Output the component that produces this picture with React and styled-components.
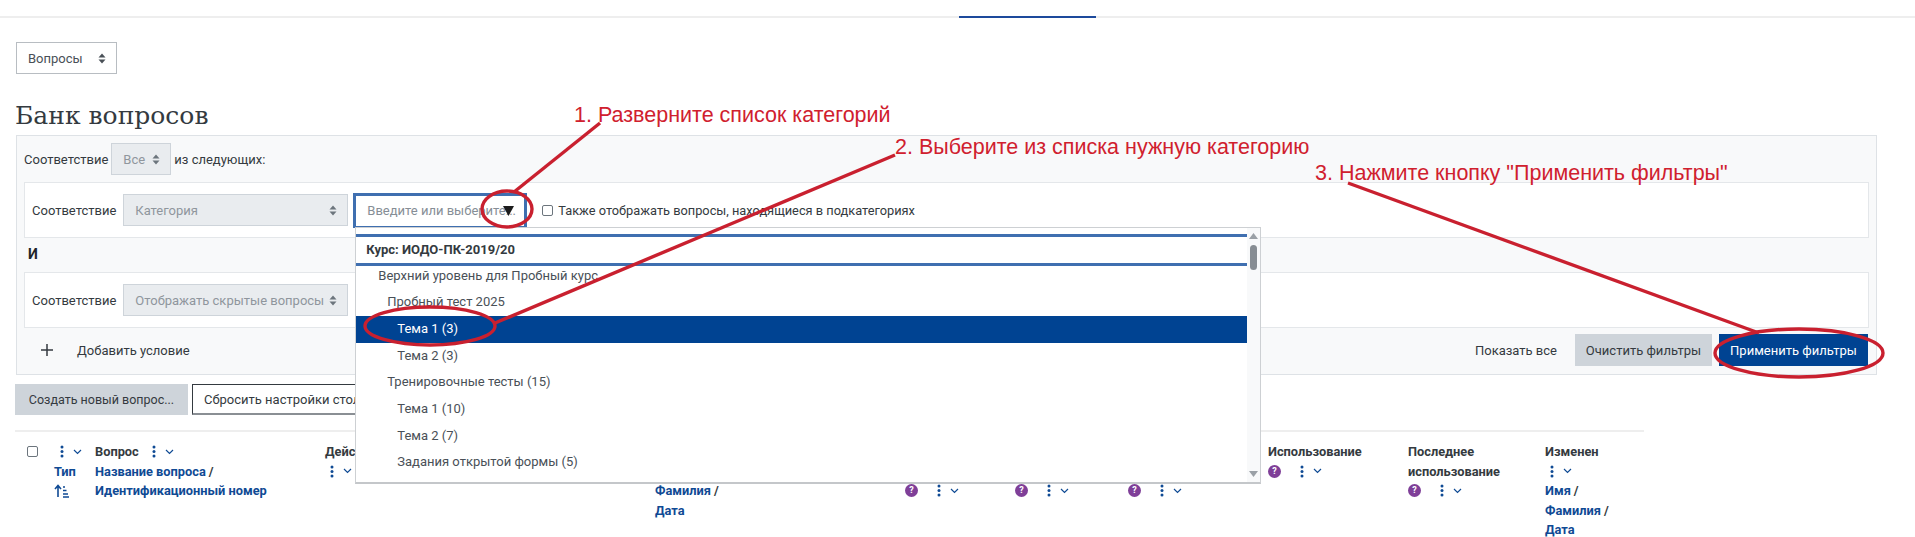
import styled, { createGlobalStyle } from 'styled-components';

const Global = createGlobalStyle`
  html, body { margin: 0; padding: 0; background: #fff; }
  body { font-family: Roboto, "Liberation Sans", sans-serif; font-size: 13px; color: #343a40; }
`;

const Page = styled.div`
  position: relative;
  width: 1915px;
  height: 537px;
  overflow: hidden;
`;

const TopBar = styled.div`
  display: flex;
  height: 16px;
  padding-left: 959px;
  border-bottom: 2px solid #eee;
`;

const ActiveTab = styled.div`
  width: 137px;
  height: 2px;
  margin-top: 16px;
  background: #1d4a9c;
`;

const Main = styled.div`
  padding: 24px 38px 0 16px;
`;

const SelectBox = styled.div`
  display: flex;
  align-items: center;
  justify-content: space-between;
  box-sizing: border-box;
  flex: none;
  width: ${({ $w }) => $w}px;
  height: 32px;
  padding: 0 10px 0 11px;
  border: 1px solid ${({ $disabled }) => ($disabled ? '#ced4da' : '#b8bdc2')};
  background: ${({ $disabled }) => ($disabled ? '#e9ecef' : '#fff')};
  color: ${({ $disabled }) => ($disabled ? '#8f969d' : '#495057')};
`;

const Heading = styled.h2`
  margin: 24px 0 2px -1px;
  height: 35px;
  font-family: "DejaVu Serif", "Liberation Serif", serif;
  font-size: 25px;
  line-height: 35px;
  font-weight: 400;
  color: #343a40;
`;

const FilterPanel = styled.div`
  box-sizing: border-box;
  height: 240px;
  padding: 7px 7px 0;
  border: 1px solid #dee2e6;
  background: #f8f9fa;
`;

const MatchRow = styled.div`
  display: flex;
  align-items: center;
  gap: 3px;
  height: 32px;
`;

const FilterRow = styled.div`
  display: flex;
  align-items: center;
  box-sizing: border-box;
  height: ${({ $h }) => $h}px;
  padding-left: 7px;
  gap: 7px;
  border: 1px solid #e4e7ea;
  background: #fff;
`;

const FirstFilter = styled(FilterRow)`
  margin-top: 7px;
`;

const AndLabel = styled.div`
  height: 34px;
  padding-left: 4px;
  font-size: 14px;
  line-height: 33px;
  font-weight: 700;
  color: #212529;
`;

const AutoComplete = styled.div`
  position: relative;
  box-sizing: border-box;
  flex: none;
  width: 174px;
  height: 35px;
  margin-left: -2px;
  padding-left: 11px;
  border: 3px solid #3f6fb0;
  border-bottom-width: 2px;
  color: #868e96;
  line-height: 30px;
  white-space: nowrap;
`;

const DropTriangle = styled.svg`
  position: absolute;
  top: 10px;
  left: 147px;
`;

const CheckBox = styled.span`
  display: inline-block;
  box-sizing: border-box;
  flex: none;
  width: 11px;
  height: 11px;
  border: 1px solid #6c757d;
  border-radius: 2px;
  background: #fff;
`;

const SubCategories = styled.label`
  display: flex;
  align-items: center;
  gap: 5px;
  margin-left: 8px;
  font-size: 12.8px;
`;

const Dropdown = styled.div`
  position: absolute;
  top: 31px;
  left: -1px;
  display: flex;
  box-sizing: border-box;
  width: 906px;
  height: 257px;
  border: 1px solid #cdd0d3;
  border-bottom: 2px solid #c4c7ca;
  background: #fff;
  color: #495057;
  overflow: hidden;
  z-index: 5;
`;

const DropBody = styled.div`
  flex: 1;
  padding-top: 6px;
  overflow: hidden;
`;

const CourseHeader = styled.div`
  box-sizing: border-box;
  height: 32px;
  padding-left: 10px;
  border-top: 3px solid #3f6fb0;
  border-bottom: 3px solid #3f6fb0;
  line-height: 26px;
  font-weight: 700;
  color: #343a40;
`;

const OptionList = styled.div`
  margin-top: -3px;
`;

const Option = styled.div`
  height: 26.7px;
  padding-left: ${({ $indent }) => $indent}px;
  line-height: 26.7px;
  background: ${({ $active }) => ($active ? '#004392' : 'transparent')};
  color: ${({ $active }) => ($active ? '#fff' : '#495057')};
`;

const ScrollTrack = styled.div`
  position: relative;
  flex: none;
  width: 13px;
  background: #f8f9fa;
`;

const ScrollThumb = styled.div`
  position: absolute;
  top: 17px;
  left: 3px;
  width: 7px;
  height: 25px;
  border-radius: 4px;
  background: #878d93;
`;

const ScrollArrow = styled.svg`
  position: absolute;
  left: 2px;
  ${({ $down }) => ($down ? 'bottom: 5px;' : 'top: 5px;')}
`;

const AddRow = styled.div`
  display: flex;
  align-items: center;
  height: 44px;
  padding-left: 17px;
`;

const AddLabel = styled.span`
  margin-left: 24px;
`;

const RightActions = styled.div`
  display: flex;
  align-items: center;
  margin-left: auto;
  margin-right: 1px;
`;

const ShowAll = styled.span`
  margin-right: 18px;
`;

const Button = styled.div`
  display: flex;
  align-items: center;
  justify-content: center;
  box-sizing: border-box;
  flex: none;
  width: ${({ $w }) => $w}px;
  height: ${({ $h }) => $h || 32}px;
  background: ${({ $primary }) => ($primary ? '#004392' : '#ced4da')};
  color: ${({ $primary }) => ($primary ? '#fff' : '#343a40')};
`;

const ClearButton = styled(Button)`
  margin-right: 7px;
`;

const ButtonRow = styled.div`
  display: flex;
  gap: 4px;
  margin: 9px 0 0 -1px;
`;

const CreateButton = styled(Button)`
  font-size: 12.5px;
`;

const ResetButton = styled(Button)`
  justify-content: flex-start;
  padding-left: 11px;
  background: #fff;
  border: 1px solid #343a40;
  border-bottom: 2px solid #8a8f94;
  white-space: nowrap;
`;

const QuestionTable = styled.div`
  display: flex;
  width: 1629px;
  height: 110px;
  margin: 15px 0 0 -1px;
  border-top: 2px solid #eee;
  padding-top: 10px;
`;

const Column = styled.div`
  flex: none;
  width: ${({ $w }) => $w}px;
  padding-top: ${({ $skip }) => ($skip || 0) * 19.5}px;
  font-size: 12.8px;
  line-height: 19.5px;
  font-weight: 700;
`;

const CheckColumn = styled.div`
  flex: none;
  width: 39px;
  padding: 3px 0 0 12px;
  box-sizing: border-box;
`;

const Line = styled.div`
  display: flex;
  align-items: center;
  height: 19.5px;
  white-space: nowrap;
  color: #343a40;
`;

const SortLink = styled(Line)`
  color: #0f4a94;
`;

const Slash = styled.span`
  color: #343a40;
  margin-left: 3px;
`;

const Controls = styled.span`
  display: inline-flex;
  align-items: center;
  margin-left: ${({ $ml }) => $ml || 0}px;
`;

const HelpIcon = styled.span`
  display: inline-flex;
  align-items: center;
  justify-content: center;
  width: 13px;
  height: 13px;
  margin-right: ${({ $mr }) => $mr || 0}px;
  border-radius: 50%;
  background: #7f3f98;
  color: #fff;
  font-size: 9px;
  font-weight: 700;
`;

const Annotation = styled.div`
  position: absolute;
  left: ${({ $x }) => $x}px;
  top: ${({ $y }) => $y}px;
  font-family: "Liberation Sans", Arial, sans-serif;
  font-size: 21.5px;
  line-height: 24px;
  color: #d0202e;
  white-space: nowrap;
  z-index: 10;
`;

const Marks = styled.svg`
  position: absolute;
  top: 0;
  left: 0;
  z-index: 9;
  pointer-events: none;
`;

const Arrows = ({ color = '#495057' }) => (
  <svg width="8" height="11" viewBox="0 0 8 11">
    <path d="M4 0.5 7.5 4.5H0.5Z M4 10.5 0.5 6.5H7.5Z" fill={color} />
  </svg>
);

const Dots = () => (
  <svg width="4" height="13" viewBox="0 0 4 13">
    <circle cx="2" cy="2" r="1.5" fill="#0f4a94" />
    <circle cx="2" cy="6.5" r="1.5" fill="#0f4a94" />
    <circle cx="2" cy="11" r="1.5" fill="#0f4a94" />
  </svg>
);

const Chevron = () => (
  <svg width="9" height="6" viewBox="0 0 9 6" style={{ marginLeft: 9 }}>
    <path d="M1 1 4.5 4.5 8 1" fill="none" stroke="#0f4a94" strokeWidth="1.2" />
  </svg>
);

const ColMenu = ({ ml }) => (
  <Controls $ml={ml}>
    <Dots />
    <Chevron />
  </Controls>
);

const SortIcon = () => (
  <svg width="15" height="14" viewBox="0 0 15 14">
    <path d="M4 13V2M1 5 4 1.5 7 5" fill="none" stroke="#0f4a94" strokeWidth="1.6" />
    <path d="M9 3h2M9 6.500h3.500M9 10h5M9 13h6" stroke="#0f4a94" strokeWidth="1.3" />
  </svg>
);

const options = [
  { label: 'Верхний уровень для Пробный курс', indent: 22 },
  { label: 'Пробный тест 2025', indent: 31 },
  { label: 'Тема 1 (3)', indent: 41, active: true },
  { label: 'Тема 2 (3)', indent: 41 },
  { label: 'Тренировочные тесты (15)', indent: 31 },
  { label: 'Тема 1 (10)', indent: 41 },
  { label: 'Тема 2 (7)', indent: 41 },
  { label: 'Задания открытой формы (5)', indent: 41 },
  { label: 'Задания закрытой формы (10)', indent: 41 },
];

export default function App() {
  return (
    <Page>
      <Global />
      <TopBar>
        <ActiveTab />
      </TopBar>
      <Main>
        <SelectBox $w={101}>
          Вопросы
          <Arrows />
        </SelectBox>
        <Heading>Банк вопросов</Heading>
        <FilterPanel>
          <MatchRow>
            Соответствие
            <SelectBox $w={60} $disabled>
              Все
              <Arrows color="#6c757d" />
            </SelectBox>
            из следующих:
          </MatchRow>
          <FirstFilter $h={56}>
            Соответствие
            <SelectBox $w={225} $disabled>
              Категория
              <Arrows color="#6c757d" />
            </SelectBox>
            <AutoComplete>
              Введите или выберите...
              <DropTriangle width="11" height="10" viewBox="0 0 11 10">
                <path d="M0 0H11L5.500 10Z" fill="#1c1c1c" />
              </DropTriangle>
              <Dropdown>
                <DropBody>
                  <CourseHeader>Курс: ИОДО-ПК-2019/20</CourseHeader>
                  <OptionList>
                    {options.map((o) => (
                      <Option key={o.label} $indent={o.indent} $active={o.active}>
                        {o.label}
                      </Option>
                    ))}
                  </OptionList>
                </DropBody>
                <ScrollTrack>
                  <ScrollArrow width="9" height="6" viewBox="0 0 9 6">
                    <path d="M4.500 0 9 6H0Z" fill="#9aa0a6" />
                  </ScrollArrow>
                  <ScrollThumb />
                  <ScrollArrow $down width="9" height="6" viewBox="0 0 9 6">
                    <path d="M4.500 6 9 0H0Z" fill="#9aa0a6" />
                  </ScrollArrow>
                </ScrollTrack>
              </Dropdown>
            </AutoComplete>
            <SubCategories>
              <CheckBox />
              Также отображать вопросы, находящиеся в подкатегориях
            </SubCategories>
          </FirstFilter>
          <AndLabel>И</AndLabel>
          <FilterRow $h={56}>
            Соответствие
            <SelectBox $w={225} $disabled>
              Отображать скрытые вопросы
              <Arrows color="#6c757d" />
            </SelectBox>
          </FilterRow>
          <AddRow>
            <svg width="12" height="12" viewBox="0 0 12 12">
              <path d="M6 0V12M0 6H12" stroke="#343a40" strokeWidth="1.500" />
            </svg>
            <AddLabel>Добавить условие</AddLabel>
            <RightActions>
              <ShowAll>Показать все</ShowAll>
              <ClearButton $w={137}>Очистить фильтры</ClearButton>
              <Button $w={149} $primary>
                Применить фильтры
              </Button>
            </RightActions>
          </AddRow>
        </FilterPanel>
        <ButtonRow>
          <CreateButton $w={173} $h={31}>
            Создать новый вопрос...
          </CreateButton>
          <ResetButton $w={240} $h={31}>
            Сбросить настройки столбцов
          </ResetButton>
        </ButtonRow>
        <QuestionTable>
          <CheckColumn>
            <CheckBox />
          </CheckColumn>
          <Column $w={41}>
            <Line>
              <ColMenu ml={6} />
            </Line>
            <SortLink>Тип</SortLink>
            <SortLink>
              <SortIcon />
            </SortLink>
          </Column>
          <Column $w={230}>
            <Line>
              Вопрос
              <ColMenu ml={13} />
            </Line>
            <SortLink>
              Название вопроса <Slash>/</Slash>
            </SortLink>
            <SortLink>Идентификационный номер</SortLink>
          </Column>
          <Column $w={330}>
            <Line>Действия</Line>
            <Line>
              <ColMenu ml={5} />
            </Line>
          </Column>
          <Column $w={250} $skip={2}>
            <SortLink>
              Фамилия <Slash>/</Slash>
            </SortLink>
            <SortLink>Дата</SortLink>
          </Column>
          <Column $w={110} $skip={2}>
            <Line>
              <HelpIcon $mr={19}>?</HelpIcon>
              <ColMenu />
            </Line>
          </Column>
          <Column $w={113} $skip={2}>
            <Line>
              <HelpIcon $mr={19}>?</HelpIcon>
              <ColMenu />
            </Line>
          </Column>
          <Column $w={140} $skip={2}>
            <Line>
              <HelpIcon $mr={19}>?</HelpIcon>
              <ColMenu />
            </Line>
          </Column>
          <Column $w={140}>
            <Line>Использование</Line>
            <Line>
              <HelpIcon $mr={19}>?</HelpIcon>
              <ColMenu />
            </Line>
          </Column>
          <Column $w={137}>
            <Line>Последнее</Line>
            <Line>использование</Line>
            <Line>
              <HelpIcon $mr={19}>?</HelpIcon>
              <ColMenu />
            </Line>
          </Column>
          <Column $w={99}>
            <Line>Изменен</Line>
            <Line>
              <ColMenu ml={5} />
            </Line>
            <SortLink>
              Имя <Slash>/</Slash>
            </SortLink>
            <SortLink>
              Фамилия <Slash>/</Slash>
            </SortLink>
            <SortLink>Дата</SortLink>
          </Column>
        </QuestionTable>
      </Main>
      <Marks width="1915" height="537" viewBox="0 0 1915 537" fill="none" stroke="#c9202f" strokeWidth="3.4">
        <path d="M600 123 514 192" />
        <ellipse cx="507" cy="209" rx="25" ry="18" />
        <path d="M895 155 495 323" />
        <ellipse cx="430" cy="326" rx="65" ry="19" />
        <path d="M1348 183 1759 333" />
        <ellipse cx="1799" cy="353" rx="84" ry="24" />
      </Marks>
      <Annotation $x={574} $y={103}>
        1. Разверните список категорий
      </Annotation>
      <Annotation $x={895} $y={135}>
        2. Выберите из списка нужную категорию
      </Annotation>
      <Annotation $x={1315} $y={161}>
        3. Нажмите кнопку "Применить фильтры"
      </Annotation>
    </Page>
  );
}
